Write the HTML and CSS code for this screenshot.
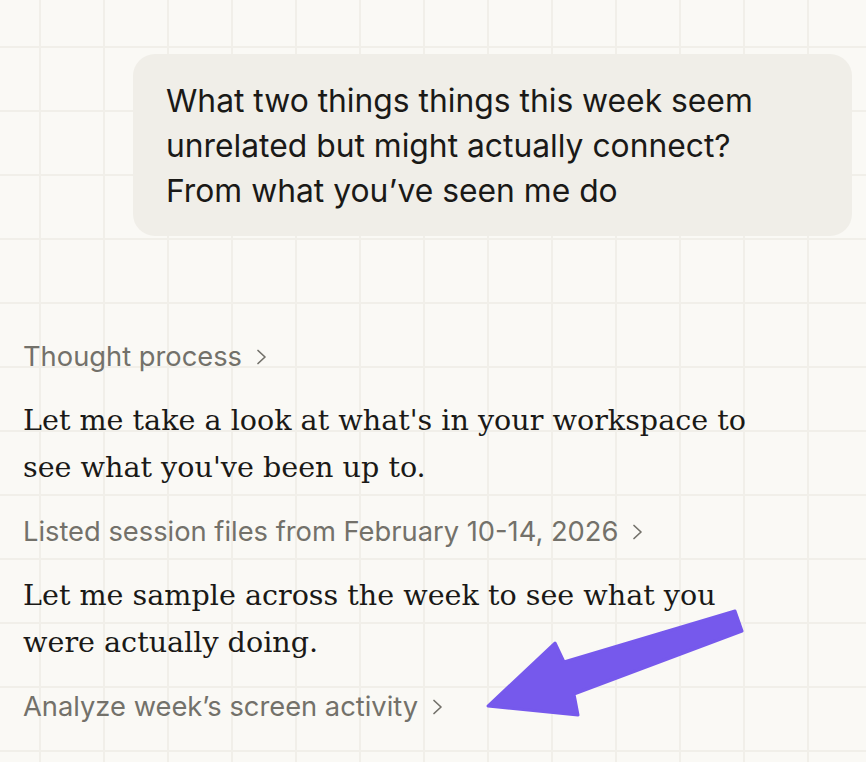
FILE: index.html
```html
<!DOCTYPE html>
<html lang="en">
<head>
<meta charset="utf-8">
<title>Chat</title>
<link rel="stylesheet" href="styles.css">
</head>
<body>
<main class="chat">
  <div class="user-row">
    <div class="bubble">What two things things this week seem unrelated but might actually connect? From what you’ve seen me do</div>
  </div>
  <div class="assistant">
    <div class="step step-first">Thought process <svg class="chev" viewBox="0 0 11 18" width="11" height="18"><polyline points="2,2.5 9,9 2,15.5"/></svg></div>
    <p class="para">Let me take a look at what's in your workspace to see what you've been up to.</p>
    <div class="step">Listed session files from February 10-14, 2026 <svg class="chev" viewBox="0 0 11 18" width="11" height="18"><polyline points="2,2.5 9,9 2,15.5"/></svg></div>
    <p class="para">Let me sample across the week to see what you were actually doing.</p>
    <div class="step">Analyze week’s screen activity <svg class="chev" viewBox="0 0 11 18" width="11" height="18"><polyline points="2,2.5 9,9 2,15.5"/></svg></div>
  </div>
</main>
<svg class="arrow" viewBox="0 0 866 762" width="866" height="762">
  <polygon points="735,611 742,631 574,694 578,715 488,706 555,643 564,662"/>
</svg>
</body>
</html>
```

FILE: styles.css
```css
html, body {
  margin: 0;
  padding: 0;
}
body {
  width: 866px;
  height: 762px;
  overflow: hidden;
  position: relative;
  background-color: #faf9f5;
  background-image:
    linear-gradient(to right, #f1efe9 0, #f1efe9 2px, transparent 2px),
    linear-gradient(to bottom, #f1efe9 0, #f1efe9 2px, transparent 2px);
  background-size: 64px 64px, 64px 64px;
  background-position: 39px 0, 0 46px;
}
.chat {
  padding: 54px 14px 0 23px;
  display: flex;
  flex-direction: column;
}
.user-row {
  display: flex;
  justify-content: flex-end;
}
.bubble {
  width: 600px;
  background: #f0eee8;
  border-radius: 22px;
  padding: 24px 86px 23px 33px;
  font-family: Inter, "Noto Sans", sans-serif;
  font-size: 31.8px;
  line-height: 45px;
  color: #1a1917;
}
.assistant {
  display: flex;
  flex-direction: column;
}
.step {
  display: flex;
  align-items: center;
  font-family: Inter, "Noto Sans", sans-serif;
  font-size: 27.3px;
  line-height: 41px;
  height: 41px;
  color: #73716a;
}
.step-first {
  margin-top: 100px;
}
.chev {
  margin-left: 14px;
  fill: none;
  stroke: #73716a;
  stroke-width: 1.7;
  stroke-linecap: round;
  stroke-linejoin: round;
}
.para {
  margin: 20px 0;
  width: 760px;
  font-family: "DejaVu Serif", serif;
  font-size: 28.6px;
  line-height: 47px;
  color: #1a1917;
}
.arrow {
  position: absolute;
  left: 0;
  top: 0;
  pointer-events: none;
}
.arrow polygon {
  fill: #7659ec;
  stroke: #7659ec;
  stroke-width: 3;
  stroke-linejoin: round;
}
```
